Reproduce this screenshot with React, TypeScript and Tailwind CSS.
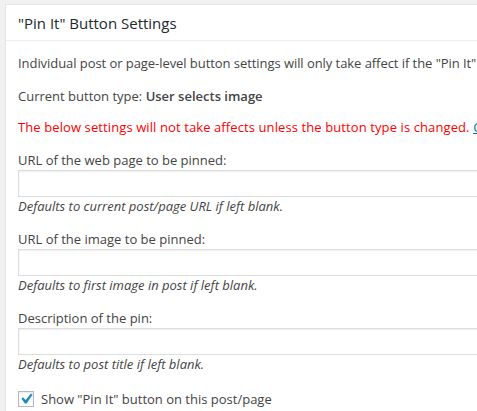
const fields = [
  { label: 'URL of the web page to be pinned:', hint: 'Defaults to current post/page URL if left blank.' },
  { label: 'URL of the image to be pinned:', hint: 'Defaults to first image in post if left blank.' },
  { label: 'Description of the pin:', hint: 'Defaults to post title if left blank.' },
];

const App = () => {
  return (
    <div className="w-[477px] h-[411px] overflow-hidden bg-[#f1f1f1] pt-[4px] pl-[5px] font-['Open_Sans',sans-serif] text-[13px] leading-[18px] text-[#444]">
      <div className="w-[520px] h-[420px] bg-white border border-[#e5e5e5] shadow-[0_1px_1px_rgba(0,0,0,0.04)]">
        <div className="h-[36px] px-[12px] flex items-center border-b border-[#eee] text-[15px] text-[#23282d]">
          "Pin It" Button Settings
        </div>
        <div className="px-[12px] pt-[13px] whitespace-nowrap">
          <p className="tracking-[-0.06px]">Individual post or page-level button settings will only take affect if the "Pin It" button type is set.</p>
          <p className="mt-[15px]">
            Current button type: <span className="font-semibold">User selects image</span>
          </p>
          <p className="mt-[13px] text-[#ff0000] tracking-[0.1px]">
            The below settings will not take affects unless the button type is changed.{' '}
            <a className="text-[#0073aa] underline">Change</a>
          </p>
          {fields.map((f, i) => (
            <div key={i} className="mt-[15px]">
              <label className="block">{f.label}</label>
              <input
                type="text"
                className="block w-[470px] h-[27px] mt-[1px] border border-[#ddd] shadow-[inset_0_1px_2px_rgba(0,0,0,0.07)] bg-white outline-none"
              />
              <p className="italic">{f.hint}</p>
            </div>
          ))}
          <div className="mt-[17px] flex items-center gap-[7px]">
            <span className="w-[16px] h-[16px] border border-[#b4b9be] bg-white flex items-center justify-center shadow-[inset_0_1px_2px_rgba(0,0,0,0.1)]">
              <svg width="20" height="20" viewBox="0 0 20 20" className="-m-[3px] shrink-0">
                <path d="M15 4.6l1.6 1.1-6 8.7H8.9L5.4 9.7l1.5-1.4 2.8 2.6z" fill="#1e8cbe" />
              </svg>
            </span>
            <span>Show "Pin It" button on this post/page</span>
          </div>
        </div>
      </div>
    </div>
  );
};

export default App;
